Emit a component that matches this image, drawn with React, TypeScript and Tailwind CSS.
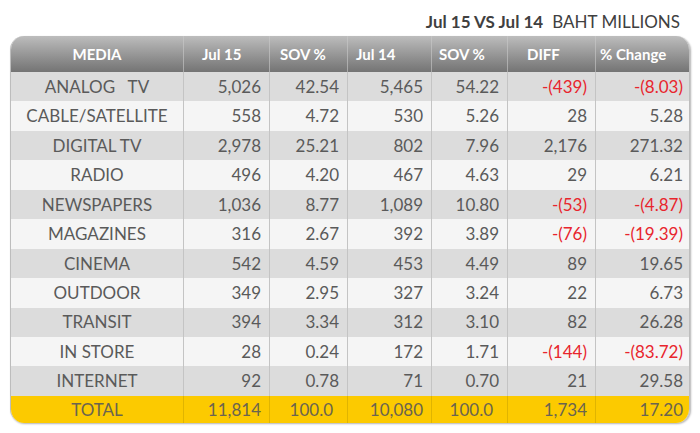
const rows = [
  ["ANALOG\u00a0\u00a0\u00a0TV", "5,026", "42.54", "5,465", "54.22", "-(439)", "-(8.03)"],
  ["CABLE/SATELLITE", "558", "4.72", "530", "5.26", "28", "5.28"],
  ["DIGITAL TV", "2,978", "25.21", "802", "7.96", "2,176", "271.32"],
  ["RADIO", "496", "4.20", "467", "4.63", "29", "6.21"],
  ["NEWSPAPERS", "1,036", "8.77", "1,089", "10.80", "-(53)", "-(4.87)"],
  ["MAGAZINES", "316", "2.67", "392", "3.89", "-(76)", "-(19.39)"],
  ["CINEMA", "542", "4.59", "453", "4.49", "89", "19.65"],
  ["OUTDOOR", "349", "2.95", "327", "3.24", "22", "6.73"],
  ["TRANSIT", "394", "3.34", "312", "3.10", "82", "26.28"],
  ["IN STORE", "28", "0.24", "172", "1.71", "-(144)", "-(83.72)"],
  ["INTERNET", "92", "0.78", "71", "0.70", "21", "29.58"],
];

const headers = [
  { label: "MEDIA", cls: "justify-center" },
  { label: "Jul 15", cls: "pl-[18px]" },
  { label: "SOV %", cls: "pl-[10px]" },
  { label: "Jul 14", cls: "pl-[8px]" },
  { label: "SOV %", cls: "pl-[7px]" },
  { label: "DIFF", cls: "pl-[19px]" },
  { label: "% Change", cls: "pl-[4px]" },
];

const grid = "grid grid-cols-[172px_86px_78px_84px_76px_88px_96px]";

export default function App() {
  return (
    <div className="w-[700px] h-[433px] bg-white" style={{ fontFamily: "Lato, 'Open Sans', sans-serif" }}>
      <div className="h-[36px] flex items-end justify-end pr-[20px] pb-[6px] text-[17px] text-[#404040] leading-none">
        <span className="font-bold">Jul 15 VS Jul 14</span>
        <span className="ml-[9px]">BAHT MILLIONS</span>
      </div>
      <div className="ml-[10px] w-[680px] rounded-[14px] overflow-hidden shadow-[1px_1px_2px_rgba(0,0,0,0.3)] border-x border-[#bdbdbd]">
        <div className={`${grid} h-[36px] bg-gradient-to-b from-[#bdbdbd] to-[#747474] text-white font-bold text-[15px]`}>
          {headers.map((h, i) => (
            <div key={i} className={`flex items-center ${h.cls} ${i > 0 ? "border-l border-[#c9c9c9]/60" : ""}`}>
              {h.label}
            </div>
          ))}
        </div>
        {rows.map((r, ri) => (
          <div key={ri} className={`${grid} h-[29.45px] text-[17px] text-[#5a5a5a] ${ri % 2 === 0 ? "bg-[#dcdcdc]" : "bg-[#f5f5f5]"}`}>
            {r.map((c, ci) => (
              <div
                key={ci}
                className={`flex items-center ${ci === 0 ? "justify-center" : "justify-end pr-[8px] border-l border-[#c4c4c4]"} ${c.startsWith("-") ? "text-[#e8252d]" : ""}`}
              >
                {c}
              </div>
            ))}
          </div>
        ))}
        <div className={`${grid} h-[27px] text-[17px] text-[#6a6450] bg-[#fcca00]`}>
          {["TOTAL", "11,814", "100.0", "10,080", "100.0", "1,734", "17.20"].map((c, ci) => (
            <div key={ci} className={`flex items-center ${ci === 0 ? "justify-center" : ci === 2 || ci === 4 ? "justify-end pr-[14px] border-l border-[#e0b400]" : "justify-end pr-[8px] border-l border-[#e0b400]"}`}>
              {c}
            </div>
          ))}
        </div>
      </div>
    </div>
  );
}
